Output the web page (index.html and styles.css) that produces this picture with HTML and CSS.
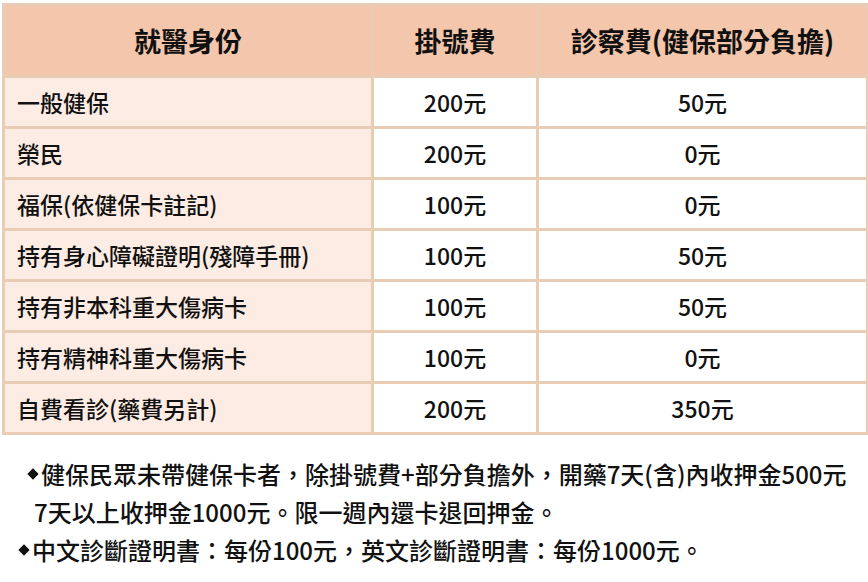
FILE: index.html
```html
<!DOCTYPE html>
<html lang="zh-Hant">
<head>
<meta charset="utf-8">
<link rel="stylesheet" href="styles.css">
</head>
<body>
<div class="page">
  <table class="fees">
    <colgroup>
      <col class="col-id">
      <col class="col-reg">
      <col class="col-exam">
    </colgroup>
    <thead>
      <tr>
        <th>就醫身份</th>
        <th>掛號費</th>
        <th>診察費(健保部分負擔)</th>
      </tr>
    </thead>
    <tbody>
      <tr><td class="name">一般健保</td><td>200元</td><td>50元</td></tr>
      <tr><td class="name">榮民</td><td>200元</td><td>0元</td></tr>
      <tr><td class="name">福保(依健保卡註記)</td><td>100元</td><td>0元</td></tr>
      <tr><td class="name">持有身心障礙證明(殘障手冊)</td><td>100元</td><td>50元</td></tr>
      <tr><td class="name">持有非本科重大傷病卡</td><td>100元</td><td>50元</td></tr>
      <tr><td class="name">持有精神科重大傷病卡</td><td>100元</td><td>0元</td></tr>
      <tr><td class="name">自費看診(藥費另計)</td><td>200元</td><td>350元</td></tr>
    </tbody>
  </table>
  <div class="notes">
    <div class="line line-1"><span class="dia"></span>健保民眾未帶健保卡者，除掛號費+部分負擔外，開藥7天(含)內收押金500元</div>
    <div class="line line-2">7天以上收押金1000元。限一週內還卡退回押金。</div>
    <div class="line line-3"><span class="dia"></span>中文診斷證明書：每份100元，英文診斷證明書：每份1000元。</div>
  </div>
</div>
</body>
</html>
```
FILE: styles.css
```css
html, body {
  margin: 0;
  padding: 0;
  background: #ffffff;
}
body {
  font-family: "Noto Sans CJK TC", "Noto Sans", sans-serif;
  color: #111111;
}
.page {
  width: 868px;
  padding: 3px 2px 0 2px;
  box-sizing: border-box;
}
.fees {
  width: 864px;
  border-collapse: collapse;
  table-layout: fixed;
}
.col-id { width: 369px; }
.col-reg { width: 165px; }
.col-exam { width: 330px; }
.fees th,
.fees td {
  border: 3px solid #e8ccb4;
  padding: 0;
  text-align: center;
  vertical-align: middle;
  line-height: 1;
}
.fees th {
  background: #f4c6ab;
  height: 69px;
  font-size: 27px;
  font-weight: 700;
}
.fees td {
  background: #ffffff;
  height: 48px;
  font-size: 23px;
  font-weight: 500;
}
.fees td.name {
  background: #fcece3;
  text-align: left;
  padding-left: 12px;
}
.notes {
  margin-top: 20px;
  font-size: 24px;
  font-weight: 500;
  line-height: 38px;
}
.line {
  display: flex;
  align-items: center;
  white-space: nowrap;
}
.line-1 { padding-left: 25px; }
.line-2 { padding-left: 32px; }
.line-3 { padding-left: 16px; }
.dia {
  display: inline-block;
  width: 8px;
  height: 8px;
  background: #111111;
  transform: rotate(45deg);
  margin: 0 4px 0 2px;
}
```
